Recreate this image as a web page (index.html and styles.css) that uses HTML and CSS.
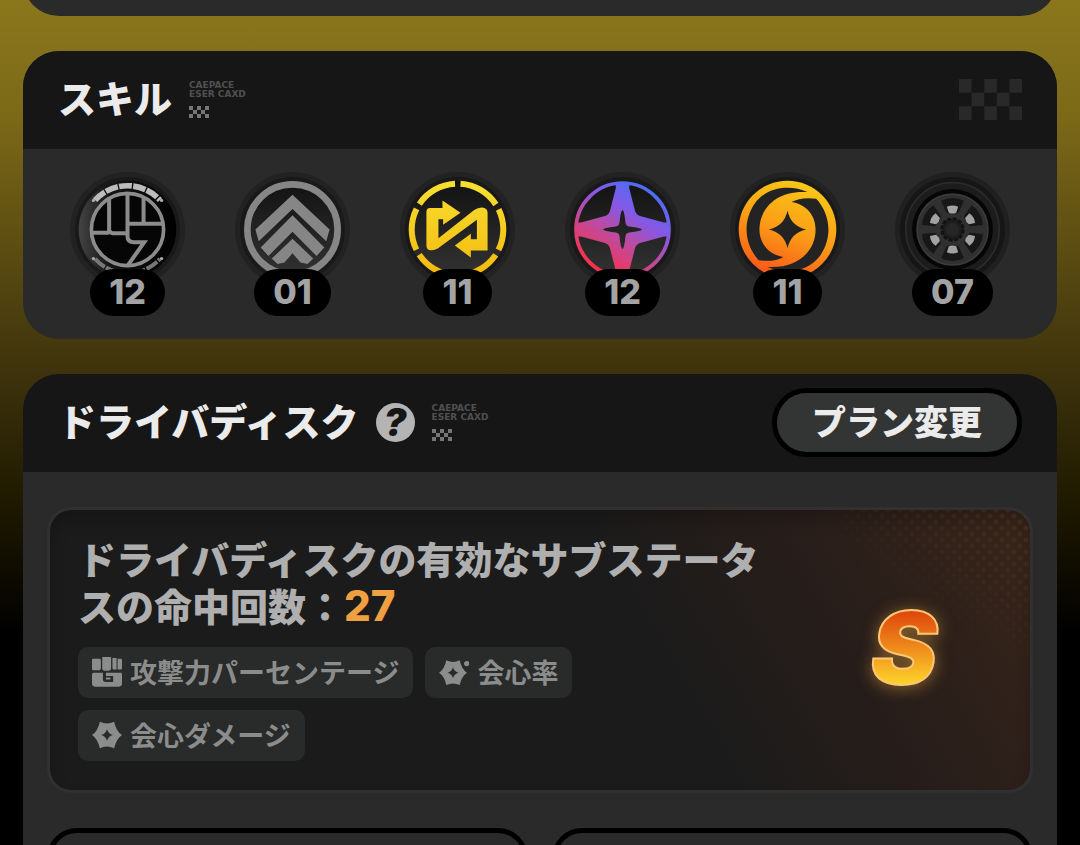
FILE: index.html
```
<!DOCTYPE html>
<html lang="ja">
<head>
    <meta charset="UTF-8">
    <meta name="viewport" content="width=device-width, initial-scale=1.0">
    <title>スキル・ドライバディスク</title>
    <link rel="stylesheet" href="styles.css">
</head>
<body>
    <svg class="defs" width="0" height="0" aria-hidden="true">
        <defs>
            <linearGradient id="steel" x1="0" y1="0" x2="1" y2="0">
                <stop offset="0" stop-color="#444"/>
                <stop offset="0.3" stop-color="#161616"/>
                <stop offset="1" stop-color="#000"/>
            </linearGradient>
            <linearGradient id="disc" x1="0" y1="0" x2="0" y2="1">
                <stop offset="0" stop-color="#121212"/>
                <stop offset="1" stop-color="#333"/>
            </linearGradient>
            <linearGradient id="yellow" gradientUnits="userSpaceOnUse" x1="0" y1="-145" x2="0" y2="145">
                <stop offset="0" stop-color="#f5e032"/>
                <stop offset="1" stop-color="#f5b80c"/>
            </linearGradient>
            <linearGradient id="nova" gradientUnits="userSpaceOnUse" x1="70" y1="-120" x2="-80" y2="120">
                <stop offset="0" stop-color="#4f6df2"/>
                <stop offset="0.3" stop-color="#8658e6"/>
                <stop offset="0.6" stop-color="#c04a9c"/>
                <stop offset="1" stop-color="#ff3048"/>
            </linearGradient>
            <linearGradient id="flame" gradientUnits="userSpaceOnUse" x1="50" y1="-140" x2="-50" y2="140">
                <stop offset="0" stop-color="#f8c818"/>
                <stop offset="0.5" stop-color="#fb9d16"/>
                <stop offset="1" stop-color="#f9561a"/>
            </linearGradient>
            <linearGradient id="rank" x1="0" y1="0" x2="0" y2="1">
                <stop offset="0.15" stop-color="#dc3a08"/>
                <stop offset="0.5" stop-color="#ee8a1c"/>
                <stop offset="0.85" stop-color="#ffe02c"/>
            </linearGradient>
            <path id="checks" d="M0 0h1v1H0zM2 0h1v1H2zM4 0h1v1H4zM1 1h1v1H1zM3 1h1v1H3zM0 2h1v1H0zM2 2h1v1H2zM4 2h1v1H4z"/>
            <g id="base">
                <circle r="172" fill="#222"/>
                <circle r="157" fill="#191919"/>
                <circle r="146" fill="url(#disc)"/>
            </g>
            <path id="burst" fill-rule="evenodd" d="M-46 0Q-28 -12 -22 -41Q0 -30 22 -41Q28 -12 46 0Q28 12 22 41Q0 30 -22 41Q-28 12 -46 0ZM0 -18Q-4 -4 -18 0Q-4 4 0 18Q4 4 18 0Q4 -4 0 -18Z"/>
        </defs>
    </svg>

    <main class="page">
        <section class="card card-prev"></section>

        <section class="card">
            <header class="card-head">
                <h2>スキル</h2>
                <div class="stamp" aria-hidden="true">
                    <span>CAEPACE</span>
                    <span>ESER CAXD</span>
                    <svg width="20" height="12" viewBox="0 0 5 3" preserveAspectRatio="none" fill="currentColor"><use href="#checks"/></svg>
                </div>
                <svg class="flag" width="63" height="41" viewBox="0 0 5 3" preserveAspectRatio="none" fill="currentColor"><use href="#checks"/></svg>
            </header>
            <ul class="skills">
                <li>
                    <svg class="skill-icon" viewBox="-172 -172 344 344">
                        <use href="#base"/>
                        <circle r="146" fill="url(#steel)"/>
                        <path d="M-97 -88A131 131 0 0 1 97 -88" fill="none" stroke="#bcbcbc" stroke-width="17" stroke-dasharray="38 4"/>
                        <path d="M-97 88A131 131 0 0 0 97 88" fill="none" stroke="#777" stroke-width="12" stroke-dasharray="38 4"/>
                        <g fill="#aaa"><circle cx="-102" cy="-87" r="5"/><circle cx="102" cy="-87" r="5"/><circle cx="-102" cy="87" r="5"/><circle cx="102" cy="87" r="5"/></g>
                        <circle r="108" fill="#060606" stroke="#8c8c8c" stroke-width="11"/>
                        <path d="M-55 -93V2Q-55 10 -63 10H-108M-55 2Q-52 11 -44 11H0M0 -108V20Q0 38 20 38H50L2 106M48 -97V-17M0 -17H106" fill="none" stroke="#8c8c8c" stroke-width="12"/>
                    </svg>
                    <span class="level">12</span>
                </li>
                <li>
                    <svg class="skill-icon" viewBox="-172 -172 344 344">
                        <use href="#base"/>
                        <circle r="135" fill="none" stroke="#868686" stroke-width="20"/>
                        <path d="M0 -104L111 0L101 35L0 -61L-101 35L-111 0ZM0 -43L95 54L72 79L0 7L-72 79L-95 54ZM0 28L62 87L45 103L24 99L0 71L-24 99L-45 103L-62 87Z" fill="#868686"/>
                    </svg>
                    <span class="level">01</span>
                </li>
                <li>
                    <svg class="skill-icon" viewBox="-172 -172 344 344">
                        <use href="#base"/>
                        <circle r="137" fill="none" stroke="url(#yellow)" stroke-width="18" pathLength="360" stroke-dasharray="53 7" stroke-dashoffset="26.5"/>
                        <path d="M-93 -52Q-93 -64 -82 -64H-45V-87L9 -50L-43 -14V-31H-57V26L50 -58Q65 -68 78 -65Q90 -62 90 -50V63H40V84L-8 48L40 13V29H58V-29L-58 56Q-70 64 -82 62Q-93 60 -93 48Z" fill="url(#yellow)"/>
                    </svg>
                    <span class="level">11</span>
                </li>
                <li>
                    <svg class="skill-icon" viewBox="-172 -172 344 344">
                        <use href="#base"/>
                        <circle r="139" fill="none" stroke="url(#nova)" stroke-width="11"/>
                        <path fill-rule="evenodd" fill="url(#nova)" d="M-20 -138H20V-124L38 -54Q41 -45 50 -41L124 -21H138V21H124L50 41Q41 45 38 54L20 124V138H-20V124L-38 54Q-41 45 -50 41L-124 21H-138V-21H-124L-50 -41Q-41 -45 -38 -54L-20 -124ZM0 -58Q-5 -58 -9 -20Q-10 -11 -20 -9Q-58 -5 -58 0Q-58 5 -20 9Q-10 11 -9 20Q-5 58 0 58Q5 58 9 20Q10 11 20 9Q58 5 58 0Q58 -5 20 -9Q10 -11 9 -20Q5 -58 0 -58Z"/>
                    </svg>
                    <span class="level">12</span>
                </li>
                <li>
                    <svg class="skill-icon" viewBox="-172 -172 344 344">
                        <use href="#base"/>
                        <circle r="146" fill="url(#flame)"/>
                        <g fill="#232323">
                            <path id="blade" d="M60 -112C10 -134 -60 -130 -98 -78C-136 -22 -128 46 -86 92Q-40 98 -12 82C-58 75 -84 40 -84 0C-84 -62 -34 -118 60 -112Z"/>
                            <use href="#blade" transform="rotate(180)"/>
                            <path d="M0 -56Q10 -10 56 0Q10 10 0 56Q-10 10 -56 0Q-10 -10 0 -56Z"/>
                        </g>
                    </svg>
                    <span class="level">11</span>
                </li>
                <li>
                    <svg class="skill-icon" viewBox="-172 -172 344 344">
                        <circle r="172" fill="#202020"/>
                        <circle r="157" fill="#161616"/>
                        <circle r="140" fill="#1c1c1c" stroke="#2b2b2b" stroke-width="5"/>
                        <circle r="121" fill="#050505"/>
                        <circle r="106" fill="#303030" stroke="#3b3b3b" stroke-width="5"/>
                        <g id="slot">
                            <path d="M-34 -86Q0 -102 34 -86L18 -50Q0 -44 -18 -50Z" fill="#171717"/>
                            <path d="M-17 -68Q0 -76 17 -68L11 -50Q0 -45 -11 -50Z" fill="#a2a2a2"/>
                        </g>
                        <use href="#slot" transform="rotate(60)"/>
                        <use href="#slot" transform="rotate(120)"/>
                        <use href="#slot" transform="rotate(180)"/>
                        <use href="#slot" transform="rotate(240)"/>
                        <use href="#slot" transform="rotate(300)"/>
                        <circle r="32" fill="#1d1d1d" stroke="#121212" stroke-width="9" pathLength="120" stroke-dasharray="7 3"/>
                        <circle r="20" fill="#262626"/>
                    </svg>
                    <span class="level">07</span>
                </li>
            </ul>
        </section>

        <section class="card card-open">
            <header class="card-head">
                <h2>ドライバディスク</h2>
                <button class="help" type="button" aria-label="ヘルプ">?</button>
                <div class="stamp" aria-hidden="true">
                    <span>CAEPACE</span>
                    <span>ESER CAXD</span>
                    <svg width="20" height="12" viewBox="0 0 5 3" preserveAspectRatio="none" fill="currentColor"><use href="#checks"/></svg>
                </div>
                <button class="plan" type="button">プラン変更</button>
            </header>
            <div class="discs">
                <div class="summary">
                    <div class="summary-main">
                        <p>ドライバディスクの有効なサブステータスの命中回数：<strong>27</strong></p>
                        <ul class="tags">
                            <li>
                                <svg width="30" height="30" viewBox="0 0 88 88" fill="currentColor">
                                    <path d="M3 5H22Q26 5 26 9V35L22 39H4Q0 39 0 35V8Q0 5 3 5ZM30 0H56V34Q56 40 50 40H36Q30 40 30 34ZM60 3H72V37H64Q60 37 60 33ZM75 5H84Q88 5 88 9V34Q88 37 84 37H75Z"/>
                                    <path d="M5 46H32V66Q32 73 40 73H62V56H41V46H84Q88 46 88 50V78Q88 87 79 87H9Q0 87 0 78V51Q0 46 5 46ZM41 60H54V66H41Z"/>
                                </svg>
                                攻撃力パーセンテージ
                            </li>
                            <li>
                                <svg width="30" height="30" viewBox="-46 -46 92 92" fill="currentColor"><use href="#burst" transform="translate(-3 2) scale(.93)"/><circle cx="39" cy="-26" r="8"/></svg>
                                会心率
                            </li>
                            <li>
                                <svg width="30" height="30" viewBox="-46 -46 92 92" fill="currentColor"><use href="#burst"/></svg>
                                会心ダメージ
                            </li>
                        </ul>
                    </div>
                    <svg class="rank" viewBox="0 0 100 100">
                        <text x="49" y="86" text-anchor="middle" fill="url(#rank)">S</text>
                    </svg>
                </div>
                <div class="slots">
                    <div class="slot"></div>
                    <div class="slot"></div>
                </div>
            </div>
        </section>
    </main>
</body>
</html>
```
FILE: styles.css
```
* {
    box-sizing: border-box;
}
body {
    margin: 0;
    height: 100vh;
    overflow: hidden;
    background: linear-gradient(#8a771c 0, #7d6a18 13%, #44380e 41%, #1d1800 60%, #000 75%);
    color: #ebebeb;
    font-family: "Noto Sans CJK JP", sans-serif;
    font-weight: 900;
}
h2, p, ul {
    margin: 0;
    padding: 0;
}
ul {
    list-style: none;
}
button {
    font-family: inherit;
    font-weight: 900;
    padding: 0;
    border: none;
    cursor: pointer;
}
.defs {
    display: block;
}
.page {
    height: 100%;
    display: flex;
    flex-direction: column;
    gap: 35px;
    padding: 0 23px;
}
.card {
    flex: none;
    background: #2a2a2a;
    border-radius: 36px;
    overflow: hidden;
}
/* mostly scrolled out above the window */
.card-prev {
    height: 80px;
    margin-top: -64px;
}
.card-open {
    flex: 1;
    border-radius: 36px 36px 0 0;
}
.card-head {
    display: flex;
    align-items: center;
    gap: 17px;
    height: 98px;
    padding: 0 35px 2px;
    background: #161616;
}
.card-head h2 {
    padding-bottom: 4px;
    font-size: 38px;
    font-weight: 900;
    line-height: 48px;
}
.stamp {
    display: flex;
    flex-direction: column;
    color: #505050;
    font-family: "DejaVu Sans", sans-serif;
    font-size: 9px;
    line-height: 9px;
}
.stamp svg {
    margin-top: 7px;
    color: #777;
}
.flag {
    margin-left: auto;
    color: #292929;
}
.skills {
    display: grid;
    grid-template-columns: repeat(6, 1fr);
    padding: 23px 22px;
}
.skills li {
    display: flex;
    flex-direction: column;
    align-items: center;
}
.skill-icon {
    width: 115px;
    height: 115px;
}
.level {
    z-index: 1;
    margin-top: -18px;
    padding: 0 19px 2px;
    border-radius: 24px;
    background: #000;
    color: #a3a3a3;
    font-family: Inter, sans-serif;
    font-size: 34px;
    font-weight: 800;
    line-height: 45px;
}
.help {
    width: 39px;
    height: 39px;
    border-radius: 50%;
    background: #b4b4b4;
    color: #161616;
    font-family: Inter, sans-serif;
    font-size: 38px;
    font-style: italic;
    line-height: 39px;
}
.plan {
    margin-left: auto;
    padding: 0 35px 4px;
    border: 5px solid #000;
    border-radius: 35px;
    background: #333534;
    color: #ebebeb;
    font-size: 34px;
    line-height: 55px;
}
.discs {
    padding: 35px 24px 0;
}
.summary {
    position: relative;
    display: flex;
    align-items: center;
    padding: 24px 0 29px 28px;
    border: 3px solid #303030;
    border-radius: 24px;
    background: linear-gradient(240deg, #38251a 0, #261d1a 24%, #1b1b1b 40%) padding-box, #303030;
    box-shadow: inset 0 10px 16px rgba(0, 0, 0, 0.2);
}
/* halftone dots fading out from the top right corner */
.summary::before {
    content: "";
    position: absolute;
    inset: 0 0 auto auto;
    width: 190px;
    height: 140px;
    background: radial-gradient(circle, rgba(130, 85, 50, 0.2) 2px, transparent 3px) 0 0 / 12px 12px,
        radial-gradient(circle, rgba(130, 85, 50, 0.2) 2px, transparent 3px) 6px 6px / 12px 12px;
    -webkit-mask-image: linear-gradient(215deg, #000, transparent 65%);
    mask-image: linear-gradient(215deg, #000, transparent 65%);
    border-radius: 0 20px 0 0;
}
.summary-main {
    flex: 1;
}
.summary p {
    padding-right: 12px;
    color: #afafaf;
    font-size: 38px;
    line-height: 47px;
}
.summary strong {
    color: #f0a040;
    font-family: Inter, sans-serif;
    font-size: 42px;
    font-weight: 800;
    line-height: 40px;
}
.tags {
    display: flex;
    flex-wrap: wrap;
    gap: 12px;
    margin-top: 19px;
}
.tags li {
    display: flex;
    align-items: center;
    gap: 8px;
    padding: 0 14px 2px;
    border-radius: 10px;
    background: #292a2a;
    color: #8b8d8c;
    font-size: 27px;
    font-weight: 700;
    line-height: 49px;
}
.rank {
    flex: 0 0 250px;
    height: 100px;
    overflow: visible;
    filter: drop-shadow(0 2px 8px rgba(240, 170, 60, 0.5));
}
.rank text {
    font-family: Inter, sans-serif;
    font-size: 100px;
    font-style: italic;
    font-weight: 900;
    stroke: #ffc676;
    stroke-width: 2px;
}
.slots {
    display: grid;
    grid-template-columns: 1fr 1fr;
    gap: 24px;
    margin-top: 35px;
}
.slot {
    height: 240px;
    border: 5px solid #000;
    border-radius: 30px;
}
```
